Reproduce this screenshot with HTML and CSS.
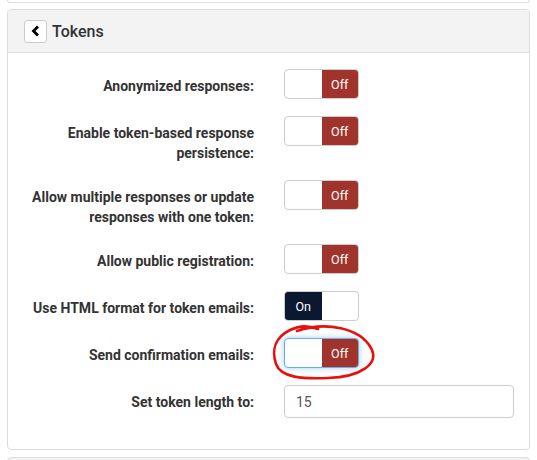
FILE: index.html
```html
<!DOCTYPE html>
<html lang="en">
<head>
<meta charset="utf-8">
<title>Tokens</title>
<link rel="stylesheet" href="styles.css">
</head>
<body>
<div class="page">
  <div class="panel panel-prev"></div>

  <section class="panel">
    <header class="panel-heading">
      <button class="back-btn" type="button" aria-label="Back">
        <svg width="9" height="12" viewBox="0 0 9 12"><polyline points="6,2.5 2.5,6 6,9.5" fill="none" stroke="#000" stroke-width="2.8" stroke-linecap="square"/></svg>
      </button>
      <h2 class="panel-title">Tokens</h2>
    </header>
    <div class="panel-body">
      <div class="form-row">
        <label class="form-label">Anonymized responses:</label>
        <div class="control"><span class="toggle off"><span class="half"></span><span class="half state">Off</span></span></div>
      </div>
      <div class="form-row">
        <label class="form-label">Enable token-based response persistence:</label>
        <div class="control"><span class="toggle off"><span class="half"></span><span class="half state">Off</span></span></div>
      </div>
      <div class="form-row">
        <label class="form-label">Allow multiple responses or update responses with one token:</label>
        <div class="control"><span class="toggle off"><span class="half"></span><span class="half state">Off</span></span></div>
      </div>
      <div class="form-row">
        <label class="form-label">Allow public registration:</label>
        <div class="control"><span class="toggle off"><span class="half"></span><span class="half state">Off</span></span></div>
      </div>
      <div class="form-row">
        <label class="form-label">Use HTML format for token emails:</label>
        <div class="control"><span class="toggle on"><span class="half state">On</span><span class="half"></span></span></div>
      </div>
      <div class="form-row">
        <label class="form-label">Send confirmation emails:</label>
        <div class="control"><span class="toggle off focus"><span class="half"></span><span class="half state">Off</span></span></div>
      </div>
      <div class="form-row">
        <label class="form-label">Set token length to:</label>
        <div class="control"><input class="text-input" type="text" value="15"></div>
      </div>
    </div>
  </section>

  <div class="panel panel-next"></div>

  <svg class="annotation" width="537" height="460" viewBox="0 0 537 460" aria-hidden="true">
    <path d="M297 331 C326 321 360 328 371 348 C380 364 360 377 328 378 C303 379 281 378 276 364 C271 349 276 337 290 330 C298 326 308 325 318 329" fill="none" stroke="#e8100c" stroke-width="2.6" stroke-linecap="round"/>
  </svg>
</div>
</body>
</html>
```

FILE: styles.css
```css
* { box-sizing: border-box; }

html, body {
  margin: 0;
  padding: 0;
  background: #fff;
  font-family: Roboto, "Liberation Sans", Arial, sans-serif;
  color: #333;
}

.page {
  position: relative;
  width: 537px;
  height: 460px;
  padding: 0 7px;
  overflow: hidden;
}

.panel {
  border: 1px solid #ddd;
  border-radius: 4px;
  background: #fff;
}

.panel-prev {
  height: 3px;
  border-top: none;
  border-radius: 0 0 4px 4px;
  margin-bottom: 6px;
}

.panel-next {
  margin-top: 7px;
  height: 20px;
  background: #f3f3f3;
}

.panel-heading {
  display: flex;
  align-items: center;
  height: 43px;
  padding: 0 16px;
  background: #f3f3f3;
  border-bottom: 1px solid #ddd;
  border-radius: 3px 3px 0 0;
}

.back-btn {
  display: flex;
  align-items: center;
  justify-content: center;
  width: 23px;
  height: 23px;
  padding: 0;
  margin: 0 5px 0 0;
  background: #fff;
  border: 1px solid #ccc;
  border-radius: 3px;
}

.panel-title {
  margin: 0;
  font-size: 16px;
  font-weight: 500;
  color: #333;
}

.panel-body {
  padding: 16px 15px 14px 15px;
}

.form-row {
  display: grid;
  grid-template-columns: 231px 230px;
  column-gap: 30px;
  align-items: start;
  margin-bottom: 17px;
}

.form-label {
  padding-top: 7px;
  text-align: right;
  font-size: 14px;
  font-weight: 700;
  line-height: 20px;
  color: #333;
}

.control { display: flex; }

.toggle {
  display: flex;
  width: 75px;
  height: 30px;
  border: 1px solid #ccc;
  border-radius: 4px;
  overflow: hidden;
  background: #fff;
}

.toggle .half {
  flex: 1 1 0;
  display: flex;
  align-items: center;
  justify-content: center;
  font-size: 12.5px;
  color: #fff;
}

.toggle.off .state { background: #a1332d; }
.toggle.on .state { background: #0a1830; }

.toggle.focus {
  border-color: #66afe9;
  box-shadow: 0 0 6px rgba(102, 175, 233, 0.6);
}

.text-input {
  width: 230px;
  height: 33px;
  padding: 0 11px;
  border: 1px solid #ccc;
  border-radius: 4px;
  font-family: inherit;
  font-size: 14px;
  color: #555;
  background: #fff;
}

.annotation {
  position: absolute;
  left: 0;
  top: 0;
  pointer-events: none;
}
```
